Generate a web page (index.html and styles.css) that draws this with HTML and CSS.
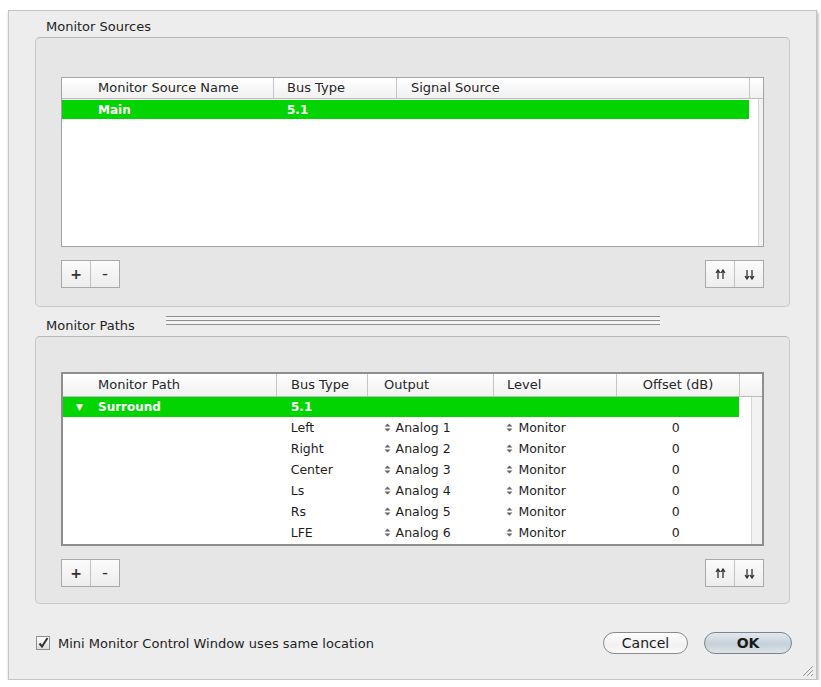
FILE: index.html
```html
<!DOCTYPE html>
<html>
<head>
<meta charset="utf-8">
<link rel="stylesheet" href="styles.css">
</head>
<body>
<div class="window">
  <div class="sec-title">Monitor Sources</div>
  <div class="group group1">
    <div class="table t1">
      <div class="thead">
        <div class="th c1a">Monitor Source Name</div>
        <div class="th c2a">Bus Type</div>
        <div class="th c3a">Signal Source</div>
        <div class="th corner"></div>
      </div>
      <div class="tbody">
        <div class="rows rows1">
          <div class="tr sel">
            <div class="td c1a">Main</div>
            <div class="td c2a">5.1</div>
          </div>
        </div>
        <div class="scroll s1"></div>
      </div>
    </div>
    <div class="btnbar">
      <div class="seg">
        <div class="segb plus">+</div>
        <div class="segb minus">–</div>
      </div>
      <div class="seg">
        <div class="segb"><svg width="11" height="11" viewBox="0 0 11 11"><path d="M3 10V2M1 4l2-3 2 3M8 10V2M6 4l2-3 2 3" fill="none" stroke="#333" stroke-width="1.3"/></svg></div>
        <div class="segb"><svg width="11" height="11" viewBox="0 0 11 11"><path d="M3 1v8M1 7l2 3 2-3M8 1v8M6 7l2 3 2-3" fill="none" stroke="#333" stroke-width="1.3"/></svg></div>
      </div>
    </div>
  </div>

  <div class="splitter">
    <div class="sec-title2">Monitor Paths</div>
    <div class="lines"></div>
  </div>

  <div class="group group2">
    <div class="table t2">
      <div class="thead">
        <div class="th c1b">Monitor Path</div>
        <div class="th c2b">Bus Type</div>
        <div class="th c3b">Output</div>
        <div class="th c4b">Level</div>
        <div class="th c5b center">Offset (dB)</div>
        <div class="th corner"></div>
      </div>
      <div class="tbody">
        <div class="rows rows2">
          <div class="tr sel">
            <div class="td c1b"><span class="tri">▼</span>Surround</div>
            <div class="td c2b">5.1</div>
          </div>
          <div class="tr">
            <div class="td c1b"></div>
            <div class="td c2b">Left</div>
            <div class="td c3b"><svg class="pop" width="7" height="9" viewBox="0 0 7 9"><path d="M3.5 0.5L6.5 3.5H0.5ZM3.5 8.5L0.5 5.5H6.5Z" fill="#666"/></svg>Analog 1</div>
            <div class="td c4b"><svg class="pop" width="7" height="9" viewBox="0 0 7 9"><path d="M3.5 0.5L6.5 3.5H0.5ZM3.5 8.5L0.5 5.5H6.5Z" fill="#666"/></svg>Monitor</div>
            <div class="td c5b center">0</div>
          </div>
          <div class="tr">
            <div class="td c1b"></div>
            <div class="td c2b">Right</div>
            <div class="td c3b"><svg class="pop" width="7" height="9" viewBox="0 0 7 9"><path d="M3.5 0.5L6.5 3.5H0.5ZM3.5 8.5L0.5 5.5H6.5Z" fill="#666"/></svg>Analog 2</div>
            <div class="td c4b"><svg class="pop" width="7" height="9" viewBox="0 0 7 9"><path d="M3.5 0.5L6.5 3.5H0.5ZM3.5 8.5L0.5 5.5H6.5Z" fill="#666"/></svg>Monitor</div>
            <div class="td c5b center">0</div>
          </div>
          <div class="tr">
            <div class="td c1b"></div>
            <div class="td c2b">Center</div>
            <div class="td c3b"><svg class="pop" width="7" height="9" viewBox="0 0 7 9"><path d="M3.5 0.5L6.5 3.5H0.5ZM3.5 8.5L0.5 5.5H6.5Z" fill="#666"/></svg>Analog 3</div>
            <div class="td c4b"><svg class="pop" width="7" height="9" viewBox="0 0 7 9"><path d="M3.5 0.5L6.5 3.5H0.5ZM3.5 8.5L0.5 5.5H6.5Z" fill="#666"/></svg>Monitor</div>
            <div class="td c5b center">0</div>
          </div>
          <div class="tr">
            <div class="td c1b"></div>
            <div class="td c2b">Ls</div>
            <div class="td c3b"><svg class="pop" width="7" height="9" viewBox="0 0 7 9"><path d="M3.5 0.5L6.5 3.5H0.5ZM3.5 8.5L0.5 5.5H6.5Z" fill="#666"/></svg>Analog 4</div>
            <div class="td c4b"><svg class="pop" width="7" height="9" viewBox="0 0 7 9"><path d="M3.5 0.5L6.5 3.5H0.5ZM3.5 8.5L0.5 5.5H6.5Z" fill="#666"/></svg>Monitor</div>
            <div class="td c5b center">0</div>
          </div>
          <div class="tr">
            <div class="td c1b"></div>
            <div class="td c2b">Rs</div>
            <div class="td c3b"><svg class="pop" width="7" height="9" viewBox="0 0 7 9"><path d="M3.5 0.5L6.5 3.5H0.5ZM3.5 8.5L0.5 5.5H6.5Z" fill="#666"/></svg>Analog 5</div>
            <div class="td c4b"><svg class="pop" width="7" height="9" viewBox="0 0 7 9"><path d="M3.5 0.5L6.5 3.5H0.5ZM3.5 8.5L0.5 5.5H6.5Z" fill="#666"/></svg>Monitor</div>
            <div class="td c5b center">0</div>
          </div>
          <div class="tr">
            <div class="td c1b"></div>
            <div class="td c2b">LFE</div>
            <div class="td c3b"><svg class="pop" width="7" height="9" viewBox="0 0 7 9"><path d="M3.5 0.5L6.5 3.5H0.5ZM3.5 8.5L0.5 5.5H6.5Z" fill="#666"/></svg>Analog 6</div>
            <div class="td c4b"><svg class="pop" width="7" height="9" viewBox="0 0 7 9"><path d="M3.5 0.5L6.5 3.5H0.5ZM3.5 8.5L0.5 5.5H6.5Z" fill="#666"/></svg>Monitor</div>
            <div class="td c5b center">0</div>
          </div>
        </div>
        <div class="scroll s2"></div>
      </div>
    </div>
    <div class="btnbar">
      <div class="seg">
        <div class="segb plus">+</div>
        <div class="segb minus">–</div>
      </div>
      <div class="seg">
        <div class="segb"><svg width="11" height="11" viewBox="0 0 11 11"><path d="M3 10V2M1 4l2-3 2 3M8 10V2M6 4l2-3 2 3" fill="none" stroke="#333" stroke-width="1.3"/></svg></div>
        <div class="segb"><svg width="11" height="11" viewBox="0 0 11 11"><path d="M3 1v8M1 7l2 3 2-3M8 1v8M6 7l2 3 2-3" fill="none" stroke="#333" stroke-width="1.3"/></svg></div>
      </div>
    </div>
  </div>

  <div class="footer">
    <label class="check">
      <span class="box"><svg width="12" height="12" viewBox="0 0 12 12"><path d="M2.5 6.5l2.5 3L10.5 1" fill="none" stroke="#333" stroke-width="2"/></svg></span>
      <span>Mini Monitor Control Window uses same location</span>
    </label>
    <div class="actions">
      <div class="pill cancel">Cancel</div>
      <div class="pill ok">OK</div>
    </div>
  </div>
  <svg class="grip" width="14" height="14" viewBox="0 0 14 14"><path d="M13 3L3 13M13 7L7 13M13 11L11 13" stroke="#9a9a9a" stroke-width="1"/></svg>
</div>
</body>
</html>
```
FILE: styles.css
```css
html, body {
  margin: 0;
  padding: 0;
  background: #ffffff;
}
body {
  font-family: "DejaVu Sans", "Liberation Sans", sans-serif;
  font-size: 13px;
  color: #1e1e1e;
}
.window {
  position: relative;
  margin: 10px 0 0 8px;
  width: 809px;
  height: 670px;
  box-sizing: border-box;
  border: 1px solid #c4c4c4;
  background: #ededed;
  box-shadow: 1px 2px 3px rgba(0, 0, 0, 0.35);
  padding-left: 26px;
  display: flex;
  flex-direction: column;
}
.sec-title {
  height: 26px;
  box-sizing: border-box;
  padding: 6px 0 0 11px;
  line-height: 20px;
}
.group {
  width: 755px;
  box-sizing: border-box;
  border: 1px solid #c9c9c9;
  border-top-color: #b9b9b9;
  border-radius: 5px;
  background: #e6e6e6;
  padding: 39px 25px 0 25px;
}
.group1 {
  height: 270px;
}
.group2 {
  height: 268px;
  padding-top: 35px;
}
.table {
  width: 703px;
  box-sizing: border-box;
  background: #ffffff;
  display: flex;
  flex-direction: column;
}
.t1 {
  height: 170px;
  border: 1px solid #a3a3a3;
}
.t2 {
  height: 174px;
  border: 2px solid #8e8e8e;
}
.thead {
  display: flex;
  flex: none;
  background: linear-gradient(#ffffff, #f1f1f1);
  border-bottom: 1px solid #bdbdbd;
}
.t1 .thead { height: 20px; }
.t2 .thead { height: 22px; }
.th {
  box-sizing: border-box;
  border-right: 1px solid #c6c6c6;
  line-height: 20px;
  white-space: nowrap;
  color: #262626;
}
.t2 .th { line-height: 22px; }
.th.corner {
  flex: 1;
  border-right: none;
}
.c1a { width: 212px; padding-left: 36px; }
.c2a { width: 123px; padding-left: 13px; }
.c3a { width: 353px; padding-left: 14px; }
.c1b { width: 214px; padding-left: 35px; }
.c2b { width: 91px; padding-left: 14px; }
.c3b { width: 126px; padding-left: 16px; }
.c4b { width: 123px; padding-left: 13px; }
.c5b { width: 123px; }
.th.center { text-align: center; padding-left: 0; }
.tbody {
  flex: 1;
  display: flex;
}
.rows1 { width: 687px; }
.rows2 { width: 676px; }
.tr {
  display: flex;
  height: 21px;
  line-height: 21px;
  white-space: nowrap;
  font-size: 12.5px;
}
.tr .td {
  box-sizing: border-box;
  display: flex;
  align-items: center;
}
.tr .td.center {
  justify-content: center;
  padding-left: 0;
  padding-right: 4px;
}
.tr.sel {
  height: 20px;
  line-height: 20px;
  background: #02d402;
  color: #ffffff;
  font-weight: bold;
  font-size: 12px;
}
.t1 .tr.sel { height: 19px; margin-top: 1px; }
.tri {
  font-size: 9px;
  margin-left: -22px;
  width: 22px;
}
.pop {
  margin-right: 5px;
}
.scroll {
  margin-left: auto;
  width: 4px;
  background: #f2f2f2;
  border-left: 1px solid #d7d7d7;
}
.s2 { width: 10px; }
.btnbar {
  margin-top: 13px;
  display: flex;
  justify-content: space-between;
  width: 703px;
}
.seg {
  display: flex;
  height: 28px;
  box-sizing: border-box;
  border: 1px solid #a9a9a9;
  background: linear-gradient(#fbfbfb, #ededed);
}
.segb {
  width: 28px;
  display: flex;
  align-items: center;
  justify-content: center;
  font-weight: bold;
  color: #333;
}
.segb + .segb {
  border-left: 1px solid #c2c2c2;
}
.plus { font-size: 14px; }
.minus { font-size: 11px; }
.splitter {
  height: 29px;
  display: flex;
}
.sec-title2 {
  width: 131px;
  box-sizing: border-box;
  padding: 9px 0 0 11px;
  line-height: 20px;
}
.lines {
  width: 494px;
  height: 9px;
  margin-top: 9px;
  background: repeating-linear-gradient(#8f8f8f 0 1px, #f4f4f4 1px 4px);
}
.footer {
  margin-top: 28px;
  height: 22px;
  display: flex;
  align-items: center;
  padding-right: 24px;
}
.check {
  display: flex;
  align-items: center;
  margin-left: 1px;
}
.box {
  width: 12px;
  height: 12px;
  border: 1px solid #8e8e8e;
  background: linear-gradient(#ffffff, #dcdcdc);
  margin-right: 8px;
  display: flex;
}
.actions {
  margin-left: auto;
  display: flex;
  gap: 16px;
}
.pill {
  height: 22px;
  box-sizing: border-box;
  border-radius: 11px;
  border: 1px solid #8b8b8b;
  display: flex;
  align-items: center;
  justify-content: center;
  font-size: 14px;
  color: #1a1a1a;
}
.cancel {
  width: 85px;
  background: linear-gradient(#ffffff, #f1f1f1 60%, #fafafa);
}
.ok {
  width: 88px;
  font-weight: bold;
  border-color: #7a8590;
  background: linear-gradient(#e4e9ee, #c7d0d8 55%, #dde3e8);
}
.grip {
  position: absolute;
  right: 2px;
  bottom: 2px;
}
```
